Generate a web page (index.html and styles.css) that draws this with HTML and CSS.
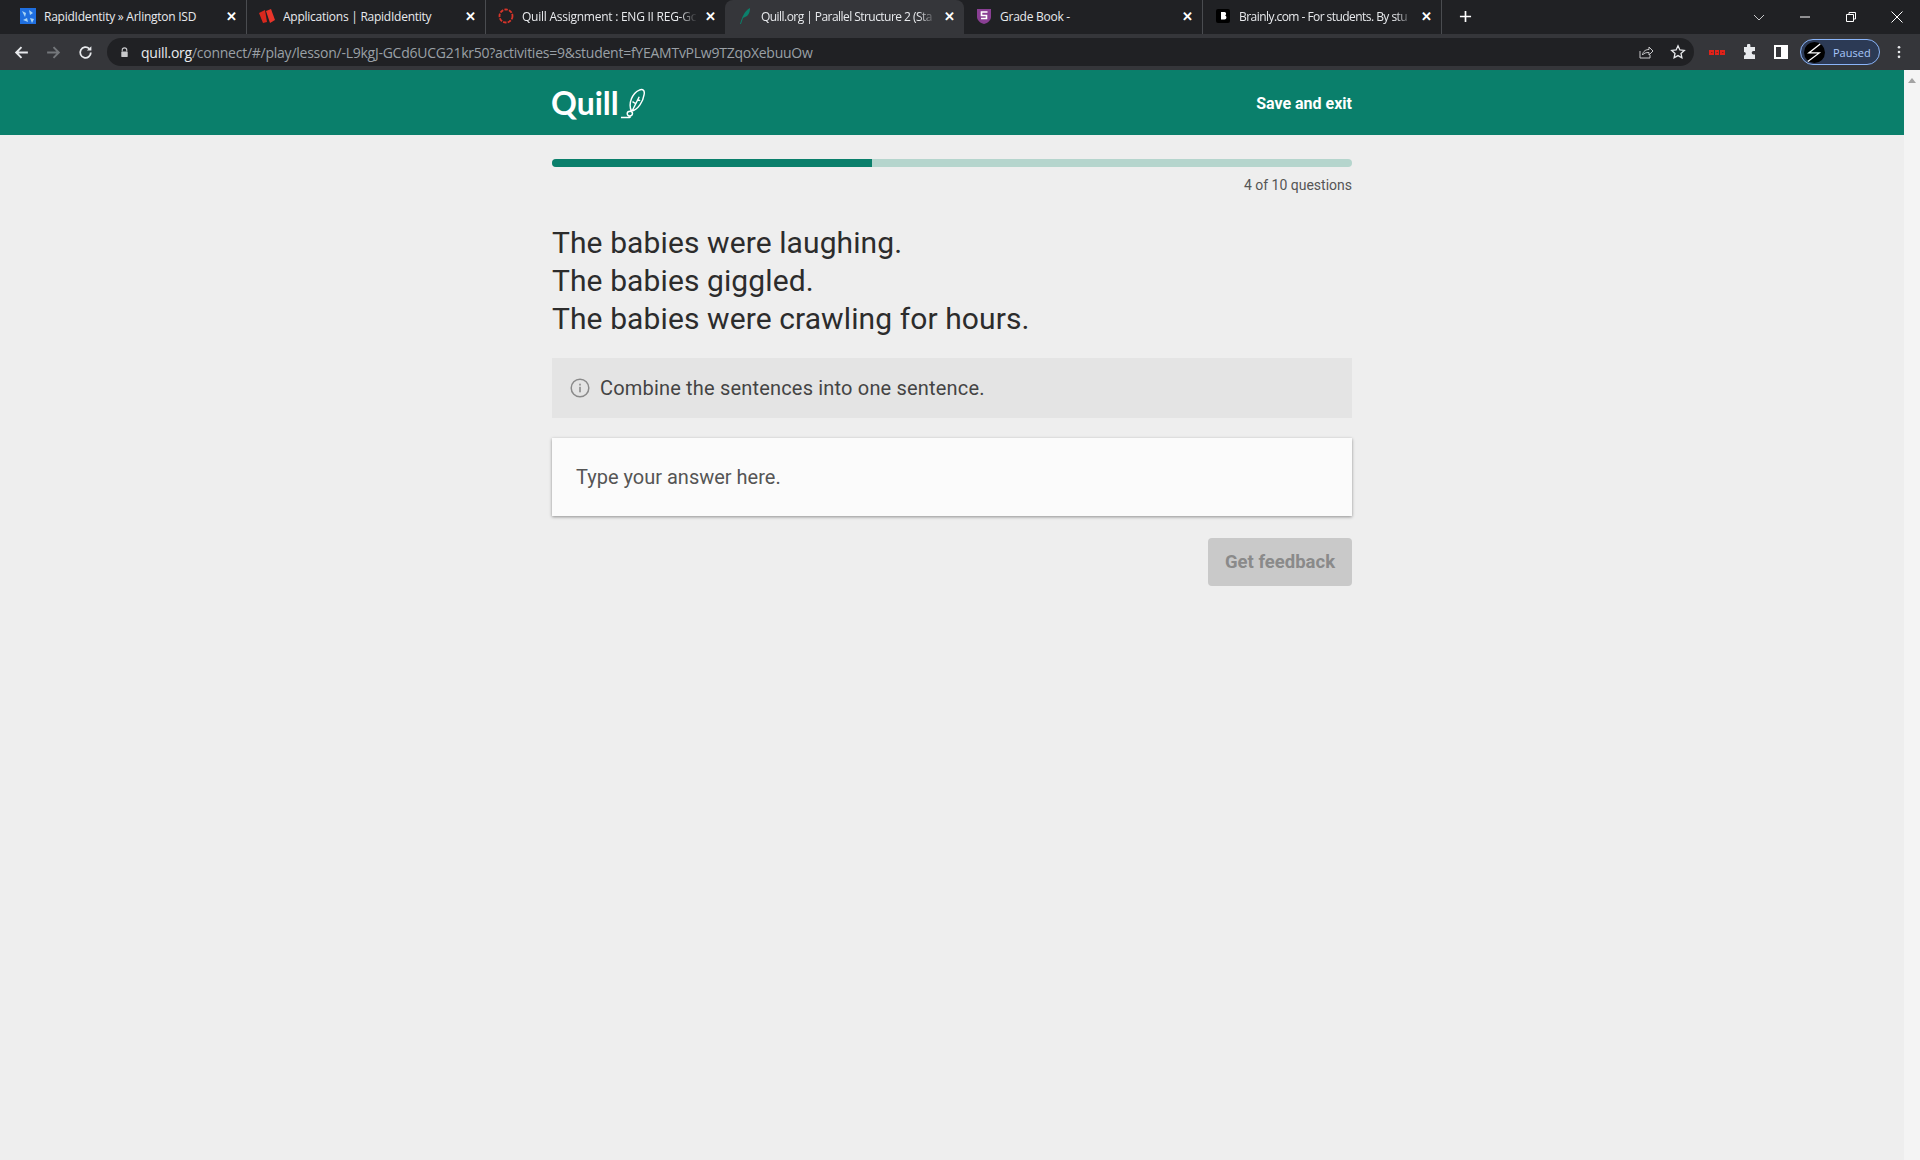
FILE: index.html
```html
<!DOCTYPE html>
<html lang="en">
  <head>
    <meta charset="UTF-8" />
    <title>Quill.org | Parallel Structure 2</title>
    <link rel="stylesheet" href="styles.css">
  </head>
  <body>
    <div class="tabStrip">
      <div class="tab">
        <svg class="favicon" viewBox="0 0 16 16"><rect width="16" height="16" fill="#1f6fe0"/><path d="M2 3l4 2-1 4zM9 2l4 3-3 2zM3 12l4-2 1 4zM10 10l4 1-2 4z" fill="#a8d4f5"/></svg>
        <span class="tabTitle">RapidIdentity » Arlington ISD</span>
        <span class="tabClose">✕</span>
      </div>
      <div class="tab">
        <svg class="favicon" viewBox="0 0 16 16"><path d="M0 5l6-3 2 12-4 1z" fill="#d8281e"/><path d="M7 3l5-2 4 11-5 3z" fill="#e8352a"/></svg>
        <span class="tabTitle">Applications | RapidIdentity</span>
        <span class="tabClose">✕</span>
      </div>
      <div class="tab noDivider">
        <svg class="favicon" viewBox="0 0 16 16"><circle cx="8" cy="8" r="6.500" fill="none" stroke="#d8352a" stroke-width="1.800" stroke-dasharray="3.500 1.200"/></svg>
        <span class="tabTitle faded">Quill Assignment : ENG II REG-Gc</span>
        <span class="tabClose">✕</span>
      </div>
      <div class="tab active">
        <svg class="favicon" viewBox="0 0 16 16"><path d="M3 16C5 10 7 3 13 0c0 5-2 8-5 9l-2 1-2 6z" fill="#0c7f6b"/></svg>
        <span class="tabTitle faded tight">Quill.org | Parallel Structure 2 (Sta</span>
        <span class="tabClose">✕</span>
      </div>
      <div class="tab">
        <svg class="favicon" viewBox="0 0 16 16"><path d="M1 1h14v8c0 3-3 6-7 7-4-1-7-4-7-7z" fill="#8a3f94"/><path d="M11.500 4H5.500v3.500h5v3H5" fill="none" stroke="#fff" stroke-width="1.600"/></svg>
        <span class="tabTitle">Grade Book -</span>
        <span class="tabClose">✕</span>
      </div>
      <div class="tab">
        <svg class="favicon" viewBox="0 0 16 16"><rect x="1" y="1" width="14" height="14" rx="2" fill="#000"/><path d="M6 4h3.500c2 0 2 3 .5 3.500 2 .5 2 4-.5 4H6z" fill="#fff"/></svg>
        <span class="tabTitle faded tight">Brainly.com - For students. By stu</span>
        <span class="tabClose">✕</span>
      </div>
      <svg class="newTab" viewBox="0 0 14 14"><path d="M7 1v12M1 7h12" stroke="#fff" stroke-width="1.800"/></svg>
      <div class="windowBtns">
        <svg viewBox="0 0 16 16"><path d="M3 6l5 5 5-5" fill="none" stroke="#c8c9cb" stroke-width="1"/></svg>
        <svg viewBox="0 0 16 16"><path d="M3 8h10" stroke="#fff" stroke-width="1"/></svg>
        <svg viewBox="0 0 16 16"><path d="M3.500 5.500h7v7h-7zM6 5.500V3.500h6.500v6.500h-2" fill="none" stroke="#fff" stroke-width="1"/></svg>
        <svg viewBox="0 0 16 16"><path d="M2.500 2.500l11 11M13.500 2.500l-11 11" stroke="#fff" stroke-width="1"/></svg>
      </div>
    </div>

    <div class="toolbar">
      <svg class="navIcon" viewBox="0 0 16 16"><path d="M14 8H3M8 3L3 8l5 5" fill="none" stroke="#e8eaed" stroke-width="1.800"/></svg>
      <svg class="navIcon" viewBox="0 0 16 16"><path d="M2 8h11M8 3l5 5-5 5" fill="none" stroke="#74777b" stroke-width="1.800"/></svg>
      <svg class="navIcon" viewBox="0 0 16 16"><path d="M13 8a5 5 0 1 1-1.500-3.600" fill="none" stroke="#e8eaed" stroke-width="1.700"/><path d="M13.500 2v4.200H9.300z" fill="#e8eaed"/></svg>
      <div class="addressBar">
        <svg class="lock" viewBox="0 0 12 12"><path d="M3.500 5V3.500a2.500 2.500 0 0 1 5 0V5" fill="none" stroke="#c8c9cb" stroke-width="1.200"/><rect x="2.500" y="5" width="7" height="6" rx="1" fill="#c8c9cb"/></svg>
        <span class="url"><span class="urlHost">quill.org</span>/connect/#/play/lesson/-L9kgJ-GCd6UCG21kr50?activities=9&amp;student=fYEAMTvPLw9TZqoXebuuOw</span>
        <svg class="shareIcon" viewBox="0 0 16 16"><path d="M2 7v7h10v-3" fill="none" stroke="#c8c9cb"/><path d="M4.500 11c.5-4 3.500-5.500 6.500-5.500V3l4 4-4 4V8.500c-3 0-5 .5-6.500 2.500z" fill="none" stroke="#c8c9cb"/></svg>
        <svg class="starIcon" viewBox="0 0 16 16"><path d="M8 1.800l1.900 4.100 4.400.5-3.300 3 .9 4.400L8 11.600l-3.900 2.200.9-4.400-3.300-3 4.400-.5z" fill="none" stroke="#e8eaed" stroke-width="1.300"/></svg>
      </div>
      <svg class="extIcon" viewBox="0 0 16 5"><path d="M0 0h5v5H0zM6 0h4v5H6zM11 0h5v5h-5z" fill="#e0231a"/><path d="M2 2h1.500v1H2zM7.500 2H9v1H7.500zM13 2h1.500v1H13z" fill="#8a1e18"/></svg>
      <svg class="extIcon puzzle" viewBox="0 0 16 16"><path d="M6 1.500a1.700 1.700 0 0 1 3.400 0V3H14v4h-1.500a1.800 1.800 0 0 0 0 3.600H14V15H3v-3.500a1.800 1.800 0 0 0 0-3.600V3h3z" fill="#e8eaed"/></svg>
      <svg class="extIcon panel" viewBox="0 0 14 14"><path d="M0 0h14v14H0zM2 2v10h5V2z" fill="#fff" fill-rule="evenodd"/></svg>
      <div class="profile">
        <svg class="avatar" viewBox="0 0 22 22"><circle cx="11" cy="11" r="11" fill="#000"/><path d="M17 2L5 11.500h11L4 20.500" fill="none" stroke="#fff" stroke-width="1.300"/></svg>
        <span>Paused</span>
      </div>
      <svg class="menuDots" viewBox="0 0 4 16"><circle cx="2" cy="2.500" r="1.500" fill="#e8eaed"/><circle cx="2" cy="8" r="1.500" fill="#e8eaed"/><circle cx="2" cy="13.500" r="1.500" fill="#e8eaed"/></svg>
    </div>

    <div class="viewport">
      <div class="page">
        <header class="quillHeader">
          <div class="headerInner">
            <div class="logo">
              <span class="logoText">Quill</span>
              <svg class="feather" viewBox="0 0 26 32"><path d="M1 30.500h9c1 0 1-1 1-2M12 24C8 16 13 5 20 2c4-2 6 1 5 5-1 7-6 15-13 17zM10 29c-1.500 0-2.500-1-2.500-2.500S9 24 10.500 24s2.500 1 2.500 2.500S11.500 29 10 29zM13 23l7-14M16 16l-3-2M18 12l3 1" fill="none" stroke="#fff" stroke-width="1.500"/></svg>
            </div>
            <a class="saveExit">Save and exit</a>
          </div>
        </header>

        <main>
          <div class="progressBar"><div class="progressFill"></div></div>
          <p class="progressLabel">4 of 10 questions</p>
          <div class="prompt">
            <p>The babies were laughing.</p>
            <p>The babies giggled.</p>
            <p>The babies were crawling for hours.</p>
          </div>
          <div class="instructions">
            <svg class="infoIcon" viewBox="0 0 20 20"><circle cx="10" cy="10" r="8.800" fill="none" stroke="#8a8a8a" stroke-width="1.500"/><rect x="9.200" y="8.800" width="1.600" height="5.500" fill="#8a8a8a"/><rect x="9.200" y="5.700" width="1.600" height="1.800" fill="#8a8a8a"/></svg>
            <span>Combine the sentences into one sentence.</span>
          </div>
          <div class="answerBox">Type your answer here.</div>
          <div class="btnRow">
            <button class="feedbackBtn" disabled>Get feedback</button>
          </div>
        </main>
      </div>
      <div class="scrollbar">
        <svg class="scrollArrow" viewBox="0 0 10 6"><path d="M5 0l5 6H0z" fill="#a3a3a3"/></svg>
      </div>
    </div>
  </body>
</html>
```

FILE: styles.css
```css
* {
  margin: 0;
  padding: 0;
  box-sizing: border-box;
}

html,
body {
  height: 100%;
  overflow: hidden;
}

body {
  display: flex;
  flex-direction: column;
  background-color: #eeeeee;
  font-family: "Roboto", "Liberation Sans", sans-serif;
}

/* browser chrome */
.tabStrip {
  height: 34px;
  display: flex;
  align-items: center;
  padding-left: 8px;
  background-color: #202124;
  color: #e8eaed;
  font-family: "Open Sans", sans-serif;
  font-size: 12px;
}

.tab {
  width: 239px;
  height: 34px;
  display: flex;
  align-items: center;
  gap: 8px;
  padding: 0 9px 2px 12px;
  border-right: 1px solid #4a4c50;
  letter-spacing: -0.25px;
}

.tab.noDivider {
  border-right: none;
}

.tab.active {
  background-color: #35363a;
  border-right: none;
  border-radius: 8px 8px 0 0;
}

.favicon {
  width: 16px;
  height: 16px;
  flex: none;
}

.tabTitle {
  flex: 1;
  min-width: 0;
  white-space: nowrap;
  overflow: hidden;
}

.tabTitle.tight {
  letter-spacing: -0.55px;
}

.tabTitle.faded {
  -webkit-mask-image: linear-gradient(to right, #000 90%, transparent);
  mask-image: linear-gradient(to right, #000 90%, transparent);
}

.tabClose {
  flex: none;
  font-size: 13px;
  font-weight: 700;
  color: #fff;
}

.newTab {
  width: 13px;
  height: 13px;
  margin: 0 0 2px 17px;
}

.windowBtns {
  margin-left: auto;
  margin-right: 15px;
  display: flex;
  gap: 30px;
}

.windowBtns svg {
  width: 16px;
  height: 16px;
}

.toolbar {
  height: 36px;
  display: flex;
  align-items: center;
  padding: 0 8px 0 13px;
  background-color: #35363a;
}

.navIcon {
  width: 17px;
  height: 17px;
  margin-right: 15px;
  flex: none;
}

.addressBar {
  width: 1587px;
  height: 28px;
  margin: 0 0 0 -2px;
  display: flex;
  align-items: center;
  padding: 0 4px 0 12px;
  border-radius: 14px;
  background-color: #202124;
  font-family: "Open Sans", sans-serif;
  font-size: 14px;
  color: #9aa0a6;
}

.lock {
  width: 11px;
  height: 11px;
  margin-right: 11px;
}

.urlHost {
  color: #e8eaed;
}

.url {
  flex: 1;
  white-space: nowrap;
  letter-spacing: -0.25px;
}

.shareIcon {
  width: 16px;
  height: 16px;
  margin-right: 16px;
}

.starIcon {
  width: 16px;
  height: 16px;
  margin-right: 4px;
}

.extIcon {
  width: 16px;
  height: 5px;
  margin-left: 15px;
  flex: none;
}

.extIcon.puzzle {
  height: 16px;
  margin-left: 16px;
}

.extIcon.panel {
  width: 14px;
  height: 14px;
  margin-left: 17px;
}

.profile {
  width: 80px;
  height: 26px;
  margin-left: 12px;
  display: flex;
  align-items: center;
  gap: 8px;
  padding-left: 3px;
  border: 1px solid #8ab4f8;
  border-radius: 13px;
  background-color: #2c3a55;
  font-family: "Open Sans", sans-serif;
  font-size: 11px;
  color: #a8c7fa;
}

.avatar {
  width: 21px;
  height: 21px;
}

.menuDots {
  width: 4px;
  height: 14px;
  margin-left: 17px;
}

/* page */
.viewport {
  flex: 1;
  display: flex;
  min-height: 0;
}

.page {
  flex: 1;
}

.scrollbar {
  width: 16px;
  display: flex;
  justify-content: center;
  padding-top: 8px;
  background-color: #f4f4f4;
}

.scrollArrow {
  width: 8px;
  height: 5px;
}

.quillHeader {
  height: 65px;
  background-color: #0a7f6b;
  color: #fff;
}

.headerInner {
  width: 800px;
  height: 100%;
  margin: 0 auto;
  display: flex;
  align-items: center;
  justify-content: space-between;
}

.logo {
  display: flex;
  align-items: flex-end;
  margin-left: -1px;
}

.logoText {
  font-family: "Lato", sans-serif;
  font-size: 32px;
  font-weight: 700;
  line-height: 40px;
}

.feather {
  width: 25px;
  height: 31px;
  margin: 0 0 4px 1px;
}

.saveExit {
  padding-top: 1px;
  font-size: 16px;
  font-weight: 700;
}

main {
  width: 800px;
  margin: 0 auto;
  padding-top: 24px;
}

.progressBar {
  height: 8px;
  border-radius: 4px;
  background-color: #b5d5cd;
  overflow: hidden;
}

.progressFill {
  width: 40%;
  height: 100%;
  background-color: #0a7f6b;
}

.progressLabel {
  margin-top: 9px;
  text-align: right;
  font-size: 14px;
  line-height: 18px;
  color: #555;
}

.prompt {
  margin-top: 30px;
  font-size: 30px;
  line-height: 38px;
  letter-spacing: 0.1px;
  color: #2c2c2c;
}

.instructions {
  height: 60px;
  margin-top: 20px;
  display: flex;
  align-items: center;
  gap: 10px;
  padding-left: 18px;
  background-color: #e4e4e4;
  font-size: 20px;
  letter-spacing: 0.18px;
  color: #444;
}

.infoIcon {
  width: 20px;
  height: 20px;
}

.answerBox {
  height: 78px;
  margin-top: 20px;
  display: flex;
  align-items: center;
  padding-left: 24px;
  background-color: #fbfbfb;
  box-shadow: 0 1px 3px rgba(0, 0, 0, 0.4);
  font-size: 20px;
  color: #555;
}

.btnRow {
  margin-top: 22px;
  display: flex;
  justify-content: flex-end;
}

.feedbackBtn {
  width: 144px;
  height: 48px;
  border: none;
  border-radius: 4px;
  background-color: #c9c9c9;
  font-family: inherit;
  font-size: 18.5px;
  font-weight: 700;
  color: #8a8a8a;
}
```
